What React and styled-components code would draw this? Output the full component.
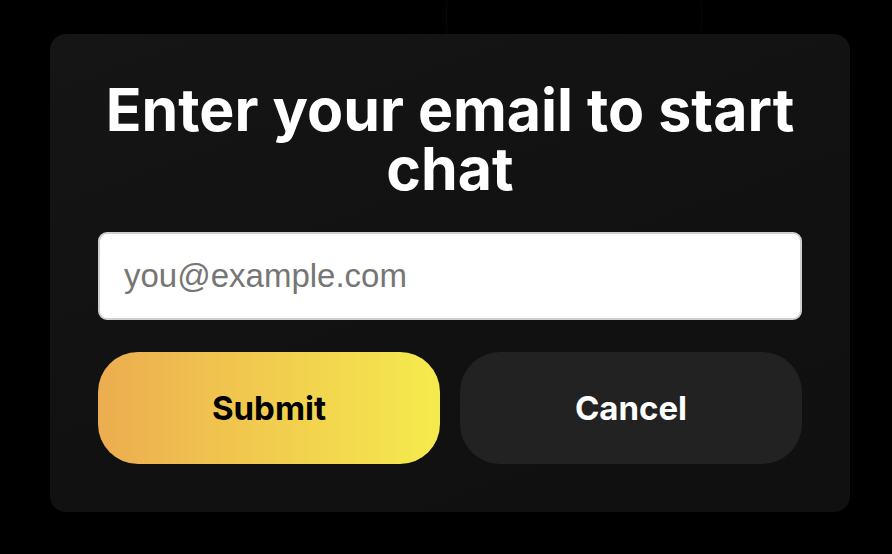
import React from "react";
import styled, { createGlobalStyle } from "styled-components";

const GlobalStyle = createGlobalStyle`
  html, body {
    margin: 0;
    padding: 0;
    background: #000;
  }
  body {
    font-family: Inter, "Noto Sans", sans-serif;
  }
`;

const Page = styled.div`
  position: relative;
  width: 892px;
  height: 554px;
  box-sizing: border-box;
  padding: 34px 42px 42px 50px;
  overflow: hidden;
  background: #000;
`;

const Ring = styled.div`
  position: absolute;
  left: 446px;
  top: -200px;
  width: 254px;
  height: 434px;
  border-radius: 50%;
  border: 1px solid rgba(255, 255, 255, 0.035);
`;

const Card = styled.div`
  position: relative;
  display: flex;
  flex-direction: column;
  box-sizing: border-box;
  height: 100%;
  padding: 46px 48px 48px;
  border-radius: 16px;
  background: linear-gradient(160deg, #151515 0%, #111 60%, #101010 100%);
`;

const Title = styled.h1`
  margin: 0 0 34px;
  color: #fff;
  font-family: Inter, sans-serif;
  font-weight: 700;
  font-size: 59px;
  line-height: 59px;
  text-align: center;
`;

const EmailInput = styled.input`
  box-sizing: border-box;
  width: 100%;
  height: 88px;
  padding: 0 24px;
  border: 2px solid #cfcfcf;
  border-radius: 9px;
  background: #fff;
  font-family: "Liberation Sans", Arial, sans-serif;
  font-size: 33px;
  color: #222;
  outline: none;

  &::placeholder {
    color: #767676;
  }
`;

const Actions = styled.div`
  display: grid;
  grid-template-columns: 1fr 1fr;
  gap: 20px;
  margin-top: 32px;
`;

const Button = styled.button`
  height: 112px;
  border: none;
  border-radius: 40px;
  font-family: Inter, sans-serif;
  font-weight: 700;
  font-size: 33px;
  cursor: pointer;
  color: ${(p) => (p.$primary ? "#000" : "#fff")};
  background: ${(p) =>
    p.$primary
      ? "linear-gradient(90deg, #ecad50 0%, #f0c34f 35%, #f5eb4d 100%)"
      : "#222"};
`;

export default function App() {
  return (
    <>
      <GlobalStyle />
      <Page>
        <Ring />
        <Card>
          <Title>Enter your email to start chat</Title>
          <EmailInput type="email" placeholder="you@example.com" />
          <Actions>
            <Button $primary>Submit</Button>
            <Button>Cancel</Button>
          </Actions>
        </Card>
      </Page>
    </>
  );
}
